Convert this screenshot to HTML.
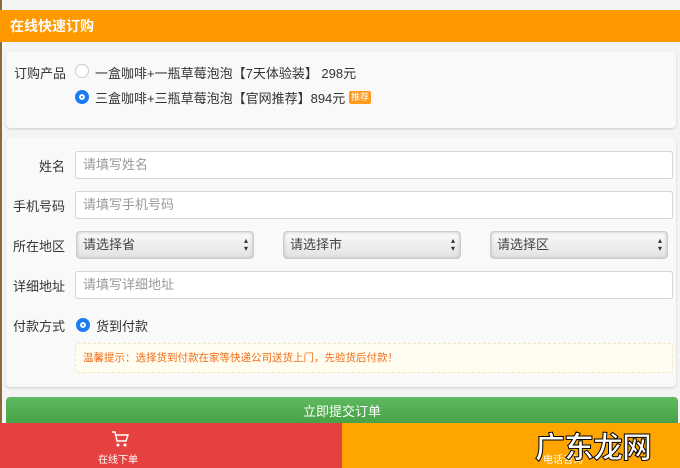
<!DOCTYPE html>
<html><head><meta charset="utf-8"><style>
*{box-sizing:border-box;margin:0;padding:0}
body{width:680px;height:468px;overflow:hidden;background:#f4f4f4;font-family:"Liberation Sans","Noto Sans CJK SC",sans-serif;font-size:13px;color:#333;position:relative}
.hd{position:absolute;left:0;top:10px;width:680px;height:32px;background:#ff9900;color:#fff;font-weight:bold;font-size:14px;line-height:32px;padding-left:10px}
.p{position:absolute;left:6px;width:670px;background:#f9f9f9;border-radius:4px;box-shadow:0 1px 2px #ccc}
.l{position:absolute;font-size:13px;color:#333}
.in{position:absolute;left:75px;width:598px;height:28px;background:#fff;border:1px solid #d4d4d4;border-radius:3px;color:#999;padding-left:7px;line-height:26px}
.sel{position:absolute;height:28px;width:178px;border:1px solid #ccc;border-radius:4px;background:linear-gradient(#fafafa,#e2e2e2);box-shadow:inset 0 0 3px #bbb;padding-left:6px;line-height:26px;color:#444}
.sel:after{content:"▴\A▾";white-space:pre;position:absolute;right:5px;top:5px;font-size:8px;line-height:8px;color:#333}
.r{position:absolute;width:14px;height:14px;border-radius:50%}
.ro{border:1px solid #ccc;background:#fff}
.rc{background:#1a7cf5;border:4px solid #1a7cf5;box-shadow:inset 0 0 0 2px #fff}
</style></head><body>
<div style="position:absolute;left:0;top:0;width:2px;height:468px;background:#8a6a3a"></div>
<div class="hd">在线快速订购</div>
<div class="p" style="top:52px;height:76px">
<div class="l" style="left:8px;top:11px">订购产品</div>
<div class="r ro" style="left:69px;top:12px"></div>
<div class="l" style="left:89px;top:11px">一盒咖啡+一瓶草莓泡泡【7天体验装】 298元</div>
<div class="r rc" style="left:69px;top:38px"></div>
<div class="l" style="left:89px;top:36px">三盒咖啡+三瓶草莓泡泡【官网推荐】894元</div>
<div style="position:absolute;left:343px;top:39px;width:22px;height:13px;background:#ff9a1a;color:#fff;font-size:9px;line-height:13px;text-align:center;border-radius:2px">推荐</div>
</div>
<div class="p" style="top:138px;height:249px">
<div class="l" style="left:33px;top:18px">姓名</div>
<div class="l" style="left:7px;top:58px">手机号码</div>
<div class="l" style="left:7px;top:98px">所在地区</div>
<div class="l" style="left:7px;top:138px">详细地址</div>
<div class="l" style="left:7px;top:178px">付款方式</div>
</div>
<div class="in" style="top:151px">请填写姓名</div>
<div class="in" style="top:191px">请填写手机号码</div>
<div class="sel" style="left:76px;top:231px">请选择省</div>
<div class="sel" style="left:283px;top:231px">请选择市</div>
<div class="sel" style="left:490px;top:231px">请选择区</div>
<div class="in" style="top:271px">请填写详细地址</div>
<div class="r rc" style="left:76px;top:318px"></div>
<div class="l" style="left:96px;top:316px">货到付款</div>
<div style="position:absolute;left:75px;top:343px;width:598px;height:30px;background:#fffdf0;border:1px dashed #f3e6c0;border-radius:3px;color:#f26d1a;font-size:10.5px;line-height:28px;padding-left:7px">温馨提示：选择货到付款在家等快递公司送货上门，先验货后付款！</div>
<div style="position:absolute;left:6px;top:397px;width:672px;height:30px;background:linear-gradient(#5fb85f,#44a044);border-radius:4px;color:#fff;text-align:center;line-height:30px;font-size:13px">立即提交订单</div>
<div style="position:absolute;left:0;top:423px;width:342px;height:45px;background:#e64141;color:#fff;font-size:10px">
<svg width="20" height="18" viewBox="0 0 20 18" style="position:absolute;left:110px;top:7px"><path d="M2 2h3l2 9h9l2-6H6" fill="none" stroke="#fff" stroke-width="1.4"/><circle cx="8" cy="15" r="1.5" fill="#fff"/><circle cx="15" cy="15" r="1.5" fill="#fff"/></svg>
<div style="position:absolute;left:98px;top:28px">在线下单</div></div>
<div style="position:absolute;left:342px;top:423px;width:338px;height:45px;background:#ffa500;color:#fff;font-size:10px"><div style="position:absolute;left:201px;top:28px">电话咨询</div></div>
<div style="position:absolute;left:535px;top:423px;font-size:30px;font-weight:bold;color:#fff;-webkit-text-stroke:1px #000;letter-spacing:-1px">广东龙网</div>
</body></html>
